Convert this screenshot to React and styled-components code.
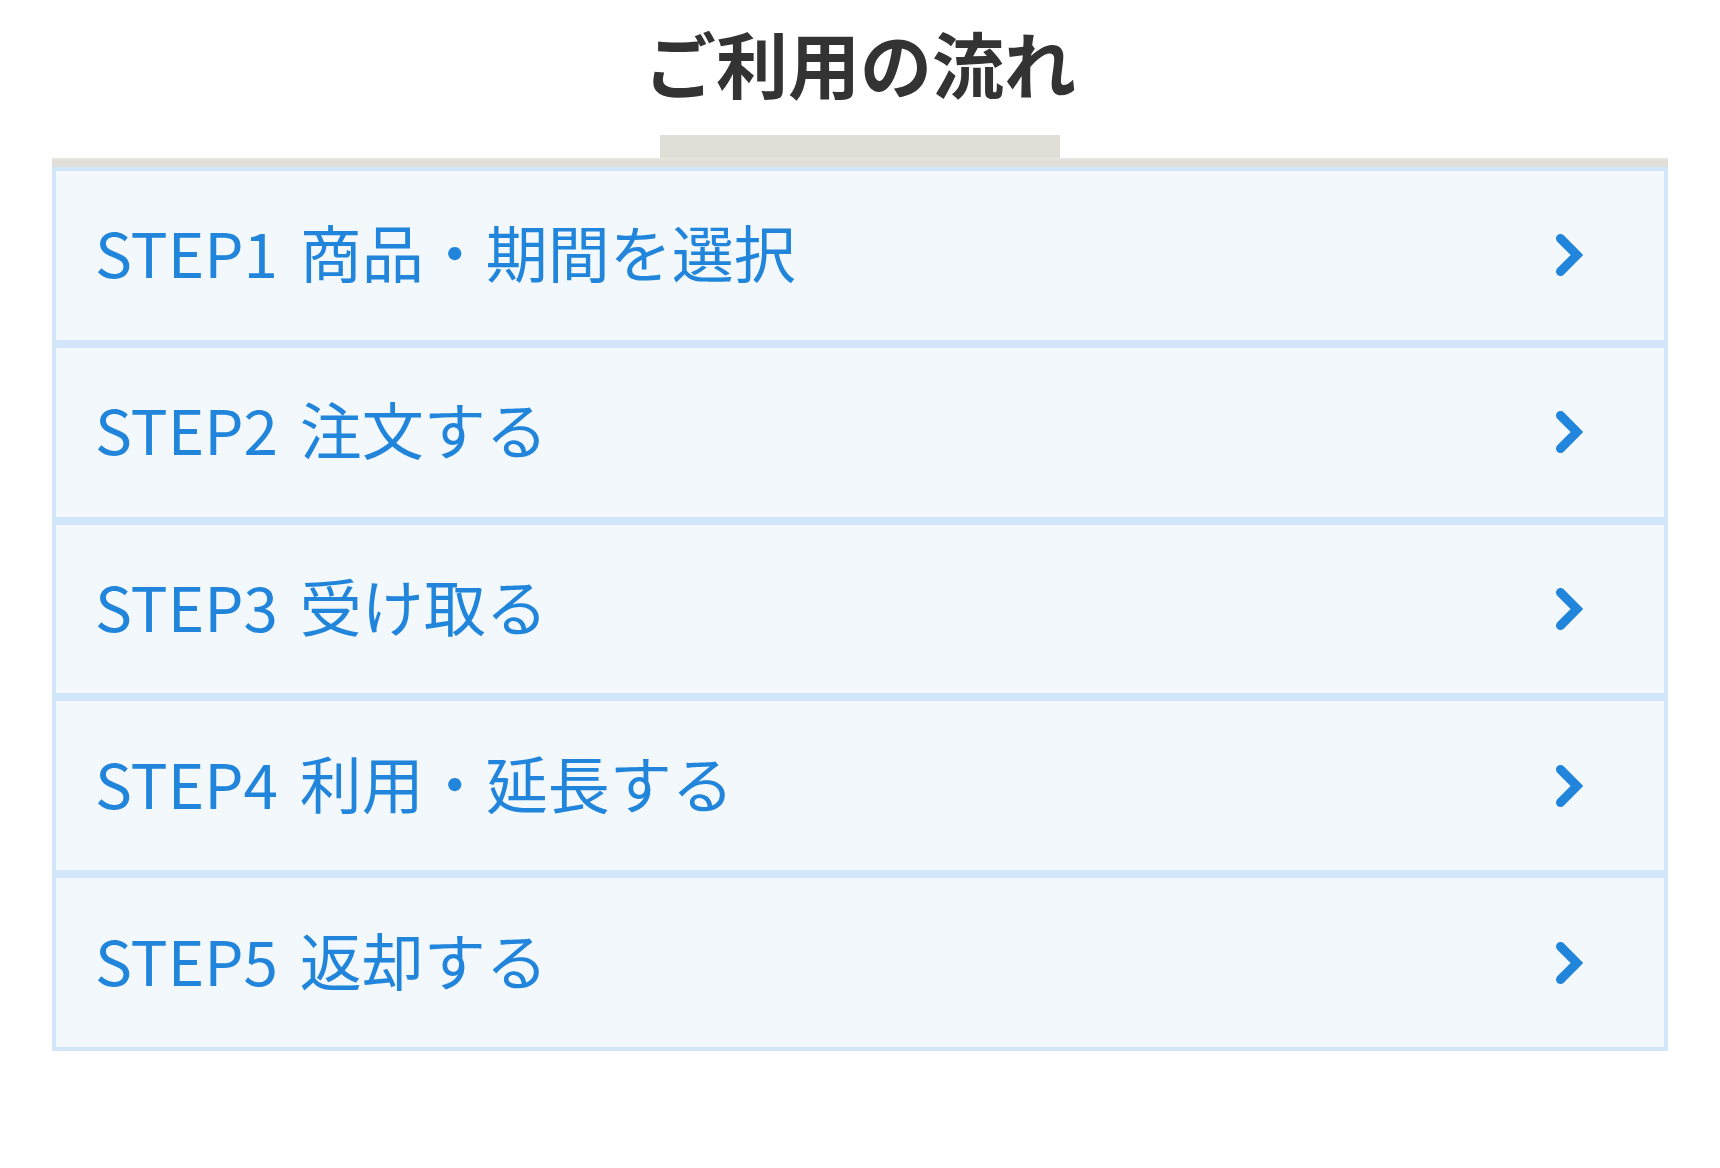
import React from "react";
import styled, { createGlobalStyle } from "styled-components";

const Global = createGlobalStyle`
  html, body { margin: 0; padding: 0; background: #ffffff; }
  body { font-family: "Noto Sans CJK JP", "Noto Sans", sans-serif; }
`;

const Page = styled.div`
  width: 1720px;
  padding: 26px 52px 0;
  box-sizing: border-box;
`;

const Title = styled.h2`
  margin: 0;
  height: 72px;
  font-size: 72px;
  line-height: 72px;
  font-weight: 700;
  color: #333333;
  text-align: center;
  letter-spacing: 0;
`;

const TabRow = styled.div`
  display: flex;
  justify-content: center;
  margin-top: 37px;
`;

const Tab = styled.div`
  width: 400px;
  height: 23px;
  background: #e1ded8;
`;

const Rail = styled.div`
  height: 9px;
  background: linear-gradient(#e9e7e2 0, #e1ded8 3px);
`;

const List = styled.ul`
  list-style: none;
  margin: 0;
  padding: 0;
`;

const Step = styled.li`
  height: 176.8px;
  box-sizing: border-box;
  border: 4px solid #d1e6f8;
  background: #f3f8fd;
  display: flex;
  align-items: center;
  justify-content: space-between;
  padding: 0 81px 0 39px;
  color: #2185db;
  font-size: 62px;
  line-height: 1;
  cursor: pointer;
`;

const Label = styled.span`
  white-space: pre;
  word-spacing: 8px;
  margin-bottom: 8px;
`;

const Chevron = () => (
  <svg width="28" height="44" viewBox="0 0 28 44" aria-hidden="true">
    <polyline
      points="5.5,5.5 22,22 5.5,38.5"
      fill="none"
      stroke="#2185db"
      strokeWidth="9"
      strokeLinecap="round"
      strokeLinejoin="miter"
    />
  </svg>
);

const steps = [
  "STEP1 商品・期間を選択",
  "STEP2 注文する",
  "STEP3 受け取る",
  "STEP4 利用・延長する",
  "STEP5 返却する",
];

export default function App() {
  return (
    <>
      <Global />
      <Page>
        <Title>ご利用の流れ</Title>
        <TabRow>
          <Tab />
        </TabRow>
        <Rail />
        <List>
          {steps.map((s) => (
            <Step key={s}>
              <Label>{s}</Label>
              <Chevron />
            </Step>
          ))}
        </List>
      </Page>
    </>
  );
}
